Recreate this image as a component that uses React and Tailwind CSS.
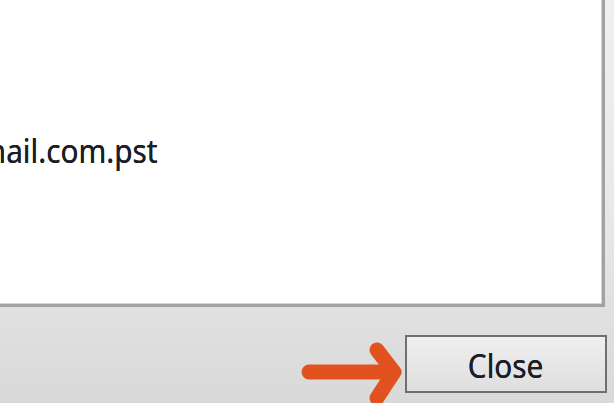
export default function App() {
  return (
    <div
      className="relative w-[614px] h-[403px] overflow-hidden bg-gradient-to-b from-[#f0f0f0] via-[#e9e9e9] to-[#d9d9d9] flex flex-col"
      style={{ fontFamily: '"Noto Sans", "Open Sans", sans-serif' }}
    >
      <div className="w-[605px] h-[307px] shrink-0 bg-white border-r-[3px] border-b-[3px] border-[#a2a2a2] shadow-[inset_-1px_-1px_0_#d6d6d6] overflow-hidden">
        <div className="pt-[135px] -ml-[40px] text-[32px] leading-none text-[#1c1d26] whitespace-nowrap origin-left scale-x-[0.93] [text-shadow:0_0_0.6px_#1c1d26]">
          gmail.com.pst
        </div>
      </div>
      <div className="flex justify-end pr-[7px] pt-[28px]">
        <button className="w-[202px] h-[58px] border-2 border-[#6f6f6f] bg-gradient-to-b from-[#efefef] to-[#dedede] flex items-center justify-center pt-[3px]">
          <span className="block text-[32px] leading-none text-[#1c1d26] scale-x-[0.93] [text-shadow:0_0_0.6px_#1c1d26]">
            Close
          </span>
        </button>
      </div>
      <svg
        className="absolute left-[290px] top-[330px]"
        width="120"
        height="73"
        viewBox="0 0 120 73"
      >
        <g
          stroke="#e2521f"
          strokeWidth="15"
          strokeLinecap="round"
          strokeLinejoin="round"
          fill="none"
        >
          <line x1="19" y1="42" x2="100" y2="42" />
          <polyline points="87,20 104,42 87,68" />
        </g>
      </svg>
    </div>
  );
}
